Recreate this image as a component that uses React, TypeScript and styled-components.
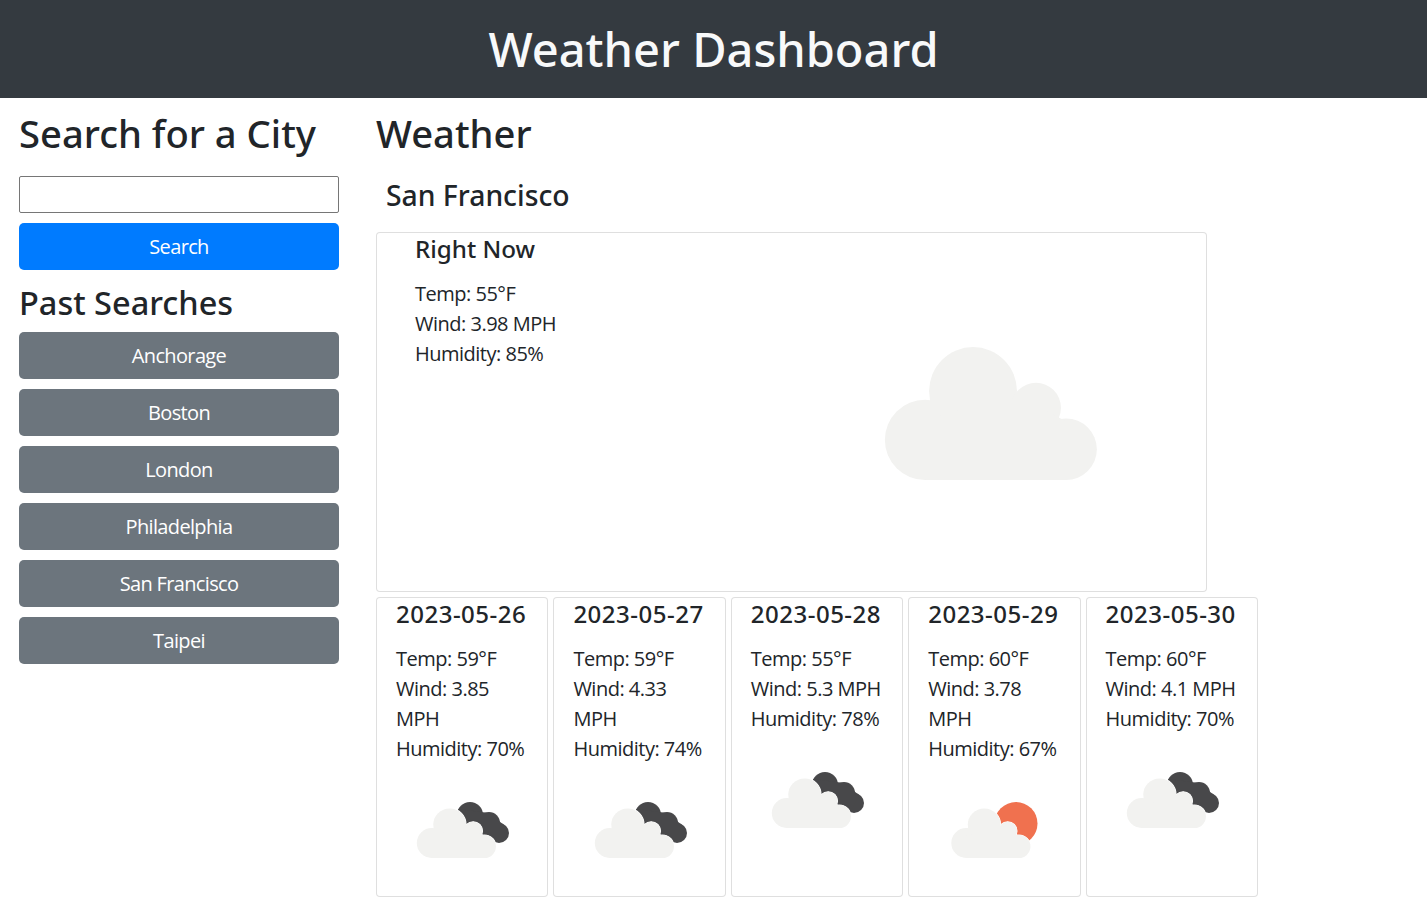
import styled, { createGlobalStyle } from 'styled-components';

type IconKind = "broken" | "sun" | "plain";

type Forecast = {
    date: string;
    temp: number;
    wind: number;
    humidity: number;
    icon: IconKind;
};

const pastCities = ["Anchorage", "Boston", "London", "Philadelphia", "San Francisco", "Taipei"];

const forecasts: Forecast[] = [
    { date: "2023-05-26", temp: 59, wind: 3.85, humidity: 70, icon: "broken" },
    { date: "2023-05-27", temp: 59, wind: 4.33, humidity: 74, icon: "broken" },
    { date: "2023-05-28", temp: 55, wind: 5.3, humidity: 78, icon: "broken" },
    { date: "2023-05-29", temp: 60, wind: 3.78, humidity: 67, icon: "sun" },
    { date: "2023-05-30", temp: 60, wind: 4.1, humidity: 70, icon: "broken" },
];

function CloudShape({ outline }: { outline?: boolean }) {
    return (
        <g fill="#f2f2f0" stroke={outline ? "#ffffff" : "none"} strokeWidth={outline ? 1.1 : 0}>
            <circle cx="19.8" cy="63" r="15" />
            <circle cx="37.7" cy="44.8" r="16.4" />
            <circle cx="61.2" cy="51" r="9.3" />
            <circle cx="72.4" cy="66.5" r="11.5" />
            <polygon points="19.8,78 19.8,56 38,50 61.2,50 70.4,55 72.4,56 72.4,78" />
        </g>
    );
}

function WeatherIcon({ kind, size }: { kind: IconKind; size: number }) {
    const cloudShift = kind === "sun" ? "translate(2.5 0)" : undefined;
    return (
        <IconSvg viewBox="0 0 100 100" $size={size} aria-hidden="true">
            {kind === "broken" && (
                <g fill="#48484a">
                    <circle cx="58" cy="35" r="13" />
                    <circle cx="77" cy="43" r="11" />
                    <circle cx="87" cy="53" r="10" />
                    <polygon points="46,29 77,33 92,45 83,63 50,50" />
                </g>
            )}
            {kind === "sun" && <circle cx="72" cy="43.5" r="21.5" fill="#f0714f" />}
            <g transform={cloudShift}>
                {kind !== "plain" && <CloudShape outline />}
                <CloudShape />
            </g>
        </IconSvg>
    );
}

function App() {
    return (
        <>
            <GlobalStyle />
            <Header>Weather Dashboard</Header>
            <Content>
                <Sidebar>
                    <PageTitle>Search for a City</PageTitle>
                    <SearchInput type="text" />
                    <SearchButton>Search</SearchButton>
                    <PastTitle>Past Searches</PastTitle>
                    {pastCities.map(city => <CityButton key={city}>{city}</CityButton>)}
                </Sidebar>
                <Main>
                    <PageTitle>Weather</PageTitle>
                    <CityName>San Francisco</CityName>
                    <NowCard>
                        <div>
                            <NowTitle>Right Now</NowTitle>
                            <Stats>
                                <Stat>Temp: 55°F</Stat>
                                <Stat>Wind: 3.98 MPH</Stat>
                                <Stat>Humidity: 85%</Stat>
                            </Stats>
                        </div>
                        <NowIcon>
                            <WeatherIcon kind="plain" size={268} />
                        </NowIcon>
                    </NowCard>
                    <ForecastRow>
                        {forecasts.map(day => (
                            <ForecastCard key={day.date}>
                                <DateTitle>{day.date}</DateTitle>
                                <Stats>
                                    <Stat>Temp: {day.temp}°F</Stat>
                                    <Stat>Wind: {day.wind} MPH</Stat>
                                    <Stat>Humidity: {day.humidity}%</Stat>
                                </Stats>
                                <ForecastIcon>
                                    <WeatherIcon kind={day.icon} size={100} />
                                </ForecastIcon>
                            </ForecastCard>
                        ))}
                    </ForecastRow>
                </Main>
            </Content>
        </>
    );
}

const GlobalStyle = createGlobalStyle`
    * {
        box-sizing: border-box;
    }

    body {
        margin: 0;
        background: #ffffff;
        color: #212529;
        font-family: "Open Sans", "Noto Sans", sans-serif;
        font-size: 20px;
        line-height: 1.5;
    }
`;

const headingFont = `"Noto Sans", "Open Sans", sans-serif`;

const Header = styled.header`
    height: 98px;
    display: flex;
    align-items: center;
    justify-content: center;
    padding-top: 1px;
    background-color: #343a40;
    color: #f8f9fa;
    font-family: ${headingFont};
    font-size: 47px;
    font-weight: 500;
`;

const Content = styled.div`
    display: flex;
    padding: 12px 0 0 19px;
    gap: 37px;
`;

const Sidebar = styled.aside`
    width: 320px;
    display: flex;
    flex-direction: column;
`;

const Main = styled.main`
    width: 883px;
`;

const PageTitle = styled.h1`
    margin: 0;
    height: 48px;
    font-family: ${headingFont};
    font-size: 38.2px;
    font-weight: 500;
    line-height: 47px;
`;

const SearchInput = styled.input`
    width: 320px;
    height: 37px;
    margin-top: 18px;
    border: 1px solid #767676;
    border-radius: 2px;
    background: #ffffff;
`;

const Button = styled.button`
    width: 100%;
    height: 47px;
    flex: none;
    border: 0;
    border-radius: 5px;
    color: #ffffff;
    font: inherit;
    letter-spacing: -0.65px;
`;

const SearchButton = styled(Button)`
    margin-top: 10px;
    background-color: #007bff;
`;

const CityButton = styled(Button)`
    margin-bottom: 10px;
    background-color: #6c757d;
`;

const PastTitle = styled.h2`
    margin: 14px 0 10px;
    height: 38px;
    font-family: ${headingFont};
    font-size: 32.5px;
    font-weight: 500;
    line-height: 37px;
`;

const CityName = styled.h3`
    margin: 0;
    padding: 17px 0 0 10px;
    height: 74px;
    font-family: ${headingFont};
    font-size: 28.3px;
    font-weight: 500;
    line-height: 40px;
`;

const Card = styled.section`
    border: 1px solid rgba(0, 0, 0, 0.125);
    border-radius: 4px;
    background: #ffffff;
`;

const NowCard = styled(Card)`
    width: 831px;
    height: 360px;
    display: flex;
    justify-content: space-between;
    padding-left: 38px;
`;

const NowIcon = styled.div`
    margin: 38px 66px 0 0;
`;

const NowTitle = styled.h4`
    margin: 0;
    padding-top: 1px;
    font-family: ${headingFont};
    font-size: 24.2px;
    font-weight: 500;
    line-height: 30px;
`;

const DateTitle = styled.h4`
    margin: 0;
    padding-top: 0;
    font-family: ${headingFont};
    font-size: 24px;
    font-weight: 500;
    line-height: 31px;
    letter-spacing: 0.5px;
    white-space: nowrap;
`;

const Stats = styled.div`
    margin-top: 15px;
`;

const Stat = styled.p`
    margin: 0;
    letter-spacing: -0.5px;
`;

const ForecastRow = styled.div`
    display: grid;
    grid-template-columns: repeat(5, 172.4px);
    column-gap: 5px;
    margin-top: 5px;
`;

const ForecastCard = styled(Card)`
    height: 300px;
    padding: 0 19px;
`;

const ForecastIcon = styled.div`
    display: flex;
    justify-content: center;
    margin-top: 16px;
`;

const IconSvg = styled.svg<{ $size: number }>`
    display: block;
    flex: none;
    width: ${props => props.$size}px;
    height: ${props => props.$size}px;
    filter: blur(0.4px);
`;

export default App;
